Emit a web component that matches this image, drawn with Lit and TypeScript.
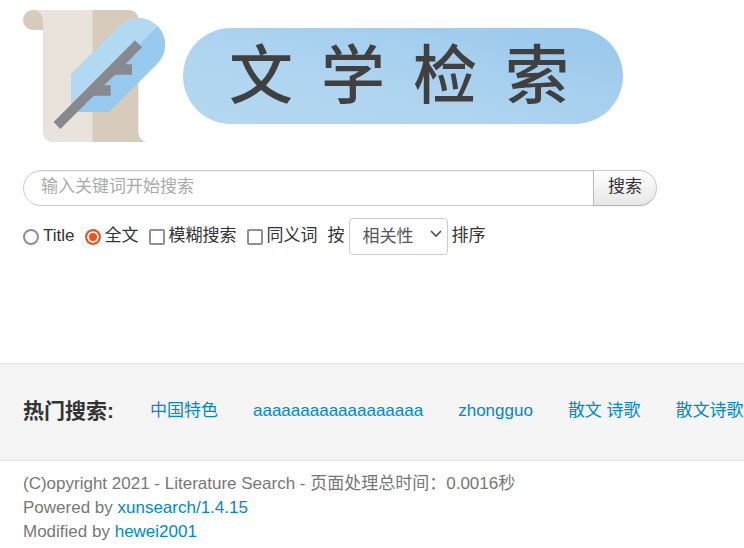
import { LitElement, html, css } from "lit";
import { customElement, state } from "lit/decorators.js";

const LINKS = ["中国特色", "aaaaaaaaaaaaaaaaaa", "zhongguo", "散文 诗歌", "散文诗歌"];

@customElement("app-root")
class AppRoot extends LitElement {
  @state() private field = "all";

  static styles = css`
    :host {
      display: block;
      overflow-x: hidden;
      background: #fff;
      color: #333;
      font: 17px/24px "Liberation Sans", "Noto Sans CJK SC", sans-serif;
    }
    a {
      color: #08c;
      text-decoration: none;
    }
    a:hover {
      text-decoration: underline;
    }
    input,
    button,
    select {
      box-sizing: border-box;
      margin: 0;
      font: inherit;
      appearance: none;
    }
    .top {
      padding: 10px 23px 108px;
    }
    .brand {
      display: flex;
      align-items: center;
      gap: 18px;
      margin: 0 0 28px;
    }
    .mark {
      flex: none;
      display: block;
    }
    .pill {
      box-sizing: border-box;
      flex: 0 1 440px;
      height: 96px;
      display: flex;
      align-items: center;
      justify-content: center;
      gap: 28px;
      margin: 0;
      padding-right: 8px;
      border-radius: 48px;
      background: linear-gradient(15deg, #b4d8f1, #b0d5f0 35%, #98c8ec);
      color: #404040;
      font-size: 64px;
      font-weight: 500;
      line-height: 64px;
    }
    .search {
      display: flex;
      max-width: 634px;
      margin-bottom: 12px;
    }
    .query {
      flex: 1;
      min-width: 0;
      height: 36px;
      padding: 0 17px 2px;
      border: 1px solid #ccc;
      border-radius: 18px 0 0 18px;
      background: #fff;
      color: #555;
      box-shadow: inset 0 1px 1px rgba(0, 0, 0, 0.075);
      outline: none;
    }
    .query::placeholder {
      color: #aaa;
      opacity: 1;
    }
    .go {
      flex: none;
      width: 64px;
      height: 36px;
      margin-left: -1px;
      padding: 0 0 2px;
      border: 1px solid #bbb;
      border-color: #ccc #ccc #b3b3b3 #bbb;
      border-radius: 0 18px 18px 0;
      background: linear-gradient(#fff, #e6e6e6);
      color: #333;
      box-shadow: 0 1px 2px rgba(0, 0, 0, 0.05);
    }
    .options {
      display: flex;
      flex-wrap: wrap;
      align-items: center;
      gap: 10px;
    }
    .option,
    .sort {
      display: flex;
      align-items: center;
      gap: 4px;
    }
    .text {
      padding-bottom: 1px;
    }
    .tick {
      width: 16px;
      height: 16px;
      border: 2px solid #8f8f9d;
      border-radius: 2px;
      background: #fff;
    }
    .tick[type="radio"] {
      border-radius: 50%;
    }
    .tick:checked {
      border-color: #e95420;
      background: #e95420;
      box-shadow: inset 0 0 0 2px #fff;
    }
    .picker {
      position: relative;
    }
    .select {
      display: block;
      width: 99px;
      height: 37px;
      padding: 1px 24px 0 13px;
      border: 1px solid #ccc;
      border-radius: 4px;
      background: #fff;
      color: #555;
    }
    .chevron {
      position: absolute;
      top: 12px;
      right: 6px;
      pointer-events: none;
    }
    .hot {
      display: flex;
      align-items: center;
      gap: 36px;
      height: 94px;
      padding: 0 23px 2px;
      border: solid #e5e5e5;
      border-width: 1px 0;
      background: #f5f5f5;
      white-space: nowrap;
    }
    .hot-title {
      margin: 0;
      font-size: 21px;
      line-height: 24px;
    }
    .hot-list {
      display: flex;
      gap: 35px;
      margin: 0;
      padding: 0;
      list-style: none;
    }
    .foot {
      padding: 11px 23px 4px;
      color: #777;
    }
    .line {
      margin: 0;
    }
  `;

  private pick(value: string) {
    this.field = value;
  }

  render() {
    return html`
      <main class="top">
        <header class="brand">
          <svg class="mark" width="142" height="132" viewBox="69 30 426 396" aria-hidden="true">
            <path fill="#eae3dc" d="M99 30H277V426H157Q129 424 129 396V60z" />
            <path fill="#d7cbbb" d="M277 30H385Q415 32 415 60V395Q416 420 439 426H277z" />
            <path fill="#d7cbbb" d="M99 30A30 30 0 0 1 129 60V90H99A30 30 0 0 1 99 30z" />
            <path fill="#b3d8f1" d="M213 222L358 77A81 81 0 0 1 472 77L213 336z" />
            <path fill="#98c9ee" d="M472 77A81 81 0 0 1 472 191L327 336H213z" />
            <path
              fill="#88888f"
              d="M405 121L426 142L376 193H396V224H345L312 256H332V287H281L181 387L161 366z"
            />
          </svg>
          <h1 class="pill">${[..."文学检索"].map((c) => html`<span>${c}</span>`)}</h1>
        </header>
        <form @submit=${(e: Event) => e.preventDefault()}>
          <div class="search">
            <input class="query" type="text" aria-label="关键词" placeholder="输入关键词开始搜索" />
            <button class="go" type="submit">搜索</button>
          </div>
          <div class="options">
            <label class="option">
              <input class="tick" type="radio" name="f" .checked=${this.field === "title"}
                @change=${() => this.pick("title")} />
              <span class="text">Title</span>
            </label>
            <label class="option">
              <input class="tick" type="radio" name="f" .checked=${this.field === "all"}
                @change=${() => this.pick("all")} />
              <span class="text">全文</span>
            </label>
            <label class="option">
              <input class="tick" type="checkbox" name="m" />
              <span class="text">模糊搜索</span>
            </label>
            <label class="option">
              <input class="tick" type="checkbox" name="syn" />
              <span class="text">同义词</span>
            </label>
            <div class="sort">
              <label class="text" for="sort">按</label>
              <span class="picker">
                <select class="select" id="sort" name="s">
                  <option>相关性</option>
                </select>
                <svg class="chevron" width="12" height="10" viewBox="0 0 12 10" aria-hidden="true">
                  <path d="M1 1L6 6L11 1" fill="none" stroke="#4c4c55" stroke-width="1.6" />
                </svg>
              </span>
              <span class="text">排序</span>
            </div>
          </div>
        </form>
      </main>
      <section class="hot">
        <h2 class="hot-title">热门搜索:</h2>
        <ul class="hot-list">
          ${LINKS.map((t) => html`<li><a href="#">${t}</a></li>`)}
        </ul>
      </section>
      <footer class="foot">
        <p class="line">(C)opyright 2021 - Literature Search - 页面处理总时间：0.0016秒</p>
        <p class="line">Powered by <a href="#">xunsearch/1.4.15</a></p>
        <p class="line">Modified by <a href="#">hewei2001</a></p>
      </footer>
    `;
  }
}
